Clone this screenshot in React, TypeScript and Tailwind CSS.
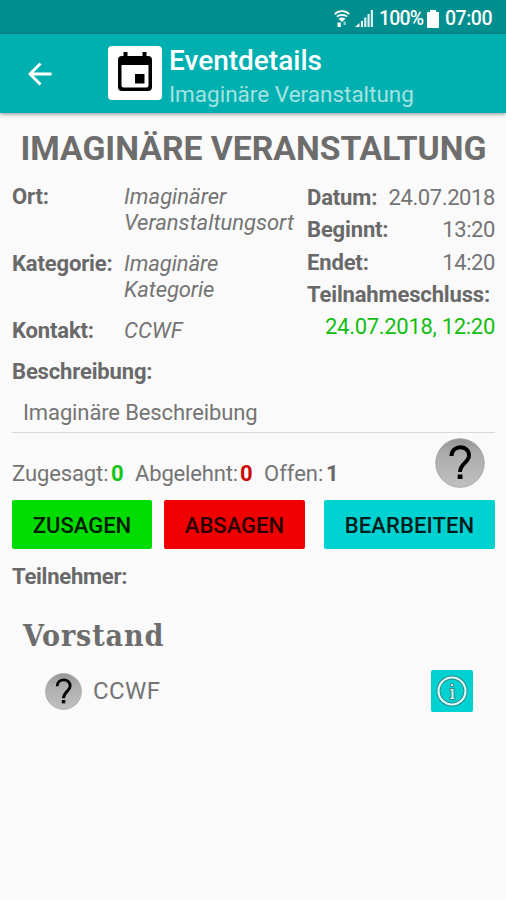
import React from 'react';
import { clsx } from 'clsx';

interface LabelProps {
  className?: string;
  children: React.ReactNode;
}

function Label({ className, children }: LabelProps) {
  return (
    <span className={clsx('font-bold tracking-[-0.15px] text-[#696969] whitespace-nowrap', className)}>{children}</span>
  );
}

function StatusBar() {
  return (
    <div className="flex h-[34px] items-center justify-end bg-[#008e8e] pr-[13px] pt-[3px] text-white">
      <svg width="16" height="17" viewBox="0 0 16 17" fill="none" stroke="#fff" className="mr-[5px]">
        <path d="M.8 4.200C4.500.2 11.500.2 15.200 4.200" strokeWidth="1.800" />
        <path d="M2.800 6.700c2.600-2.500 7.800-2.500 10.400 0" strokeWidth="1.600" />
        <path d="M4.500 8.800c2-1.700 5-1.700 7 0L8 12z" fill="#fff" stroke="none" />
        <path d="M3.500 12.500h3.300V17H3.500z" fill="#fff" stroke="none" />
        <path d="M9.500 11.500h2.500V15H9.500z" fill="#fff" fillOpacity=".55" stroke="none" />
      </svg>
      <svg width="18" height="17" viewBox="0 0 18 17" className="mr-[6px]" fill="#fff">
        <path d="M0 17l4.500-4v4zM6 11h2v6H6z" />
        <path d="M9.200 7.500h2.200V17H9.200zM12.500 4h2.200v13h-2.200zM15.800 0H18v17h-2.200z" fillOpacity=".85" />
      </svg>
      <span className="w-[45px] whitespace-nowrap text-[19.5px] font-medium leading-5 tracking-[-0.8px]">100%</span>
      <svg width="12" height="18" viewBox="0 0 12 18" fill="#fff" className="ml-[3px] mr-[6px]">
        <path d="M3 0h6v2h2q1 0 1 1v14q0 1-1 1H1q-1 0-1-1V3q0-1 1-1h2z" />
      </svg>
      <span className="w-[48px] whitespace-nowrap text-[19.5px] font-medium leading-5 tracking-[-0.5px]">07:00</span>
    </div>
  );
}

function Toolbar() {
  return (
    <header className="flex h-[79px] bg-[#00b0b0] shadow-[0_1px_4px_rgba(0,0,0,0.45)]">
      <svg width="24" height="24" viewBox="0 0 24 24" fill="none" stroke="#fff" strokeWidth="3" className="ml-[28px] mt-[28px]">
        <path d="M23.500 12H2.500M12.500 1.500L2 12l10.500 10.500" />
      </svg>
      <div className="ml-[56px] mt-[12px] flex size-[54px] items-center justify-center rounded-[4px] bg-white">
        <svg width="36" height="40" viewBox="0 0 36 40" fill="#000" className="-mt-[2px]">
          <path
            d="M6.500 0h4v4h15V0h4v4H31q4 0 4 4v27q0 4-4 4H5q-4 0-4-4V8q0-4 4-4h1.500zM4.500 13v20.500q0 2 2 2h23q2 0 2-2V13z"
            fillRule="evenodd"
          />
          <path d="M18 22h9.500v9.500H18z" />
        </svg>
      </div>
      <div className="ml-[7px] pt-[10px]">
        <h1 className="whitespace-nowrap text-[28px] font-medium leading-[34px] text-white">Eventdetails</h1>
        <p className="whitespace-nowrap text-[22.5px] leading-[32px] text-[#a5e2e2]">Imaginäre Veranstaltung</p>
      </div>
    </header>
  );
}

function QuestionBadge({ size }: { size: number }) {
  return (
    <svg width={size} height={size} viewBox="0 0 50 50" className="shrink-0">
      <defs>
        <linearGradient id={`badge${size}`} x1="0" y1="0" x2="0" y2="1">
          <stop offset="0" stopColor="#949494" />
          <stop offset=".3" stopColor="#acacac" />
          <stop offset="1" stopColor="#c0c0c0" />
        </linearGradient>
      </defs>
      <circle cx="25" cy="25" r="24.300" fill={`url(#badge${size})`} stroke="#a0a0a0" strokeWidth=".8" />
      <path d="M16.500 18C16.500 6.500 34 6.500 34 17.500c0 7-9 8-9 16.500" fill="none" stroke="#000" strokeWidth="3.900" />
      <path d="M22.700 36.500h4.800v4.500h-4.800z" />
    </svg>
  );
}

const times = [
  { label: 'Datum:', value: '24.07.2018' },
  { label: 'Beginnt:', value: '13:20' },
  { label: 'Endet:', value: '14:20' },
];

export default function App() {
  return (
    <div className="h-[900px] w-[506px] overflow-hidden bg-[#fafafa] font-[Roboto,sans-serif] text-[22px] leading-[26px] text-[#747474]">
      <StatusBar />
      <Toolbar />

      <main className="pl-3 pr-[11px]">
        <h2 className="mt-[16px] whitespace-nowrap text-center text-[33.7px] font-bold leading-[40px] text-[#6d6d6d]">
          IMAGINÄRE VERANSTALTUNG
        </h2>

        <section className="mt-[15px] flex h-[175px] justify-between">
          <dl className="grid grid-cols-[112px_172px] grid-rows-[67px_67px_26px] italic">
            <dt className="not-italic"><Label>Ort:</Label></dt>
            <dd>Imaginärer Veranstaltungsort</dd>
            <dt className="not-italic"><Label>Kategorie:</Label></dt>
            <dd className="tracking-[-0.1px]">Imaginäre<br />Kategorie</dd>
            <dt className="not-italic"><Label>Kontakt:</Label></dt>
            <dd>CCWF</dd>
          </dl>
          <div className="-mt-[2px] w-[188px] shrink-0 leading-[32.3px]">
            {times.map((t) => (
              <div key={t.label} className="flex justify-between">
                <Label>{t.label}</Label>
                <span className="tracking-[-0.4px]">{t.value}</span>
              </div>
            ))}
            <Label>Teilnahmeschluss:</Label>
            <div className="whitespace-nowrap text-right tracking-[-0.3px] text-[#12bd12]">24.07.2018, 12:20</div>
          </div>
        </section>

        <div><Label className="tracking-[-0.2px]">Beschreibung:</Label></div>
        <p className="mt-[15px] border-b border-[#d8d8d8] pb-[6px] pl-[11px] tracking-[-0.12px]">Imaginäre Beschreibung</p>

        <section className="flex h-[67px] items-start justify-between pr-[10px]">
          <div className="flex whitespace-nowrap pt-[28px]">
            <span className="w-[99px] tracking-[-0.1px]">Zugesagt:</span>
            <b className="w-[24px] text-[#16c616]">0</b>
            <span className="w-[105px] tracking-[-0.15px]">Abgelehnt:</span>
            <b className="w-[24px] text-[#cc0808]">0</b>
            <span className="w-[62px]">Offen:</span>
            <b className="text-[#696969]">1</b>
          </div>
          <div className="pt-[5px]"><QuestionBadge size={50} /></div>
        </section>

        <div className="flex h-[49px] font-medium text-[#001c00]">
          <button className="w-[140px] rounded-[2px] bg-[#00dc00] pt-[2px]">ZUSAGEN</button>
          <button className="ml-[12px] w-[141px] rounded-[2px] bg-[#f00000] pt-[2px] text-[#2a0000]">ABSAGEN</button>
          <button className="ml-auto w-[171px] rounded-[2px] bg-[#00d2d2] pt-[2px] tracking-[0.1px] text-[#001c1c]">BEARBEITEN</button>
        </div>

        <div className="mt-[15px]"><Label className="tracking-[-0.25px]">Teilnehmer:</Label></div>

        <h3 className="ml-[11px] mt-[26px] whitespace-nowrap font-['DejaVu_Serif_Condensed','DejaVu_Serif',serif] text-[30px] font-bold leading-[40px] tracking-[0.9px] text-[#6d6d6d]">
          Vorstand
        </h3>
        <div className="mt-[14px] flex items-center pl-[33px] pr-[22px]">
          <QuestionBadge size={37} />
          <span className="ml-[11px] text-[24px] tracking-[0.4px]">CCWF</span>
          <button className="ml-auto flex size-[42px] items-center justify-center rounded-[2px] bg-[#00d2d2]">
            <svg width="32" height="32" viewBox="0 0 32 32" fill="none">
              <circle cx="16" cy="16" r="13.500" stroke="#397f7f" strokeWidth="4" />
              <circle cx="16" cy="16" r="13.500" stroke="#d5ffff" strokeWidth="2.200" />
              <path d="M13.500 13.500h4.500v9h1v2h-5.500v-2H15v-7h-1.500zM14.500 8.500h3v3h-3z" fill="#c5eeee" stroke="#397f7f" strokeWidth=".9" />
            </svg>
          </button>
        </div>
      </main>
    </div>
  );
}
